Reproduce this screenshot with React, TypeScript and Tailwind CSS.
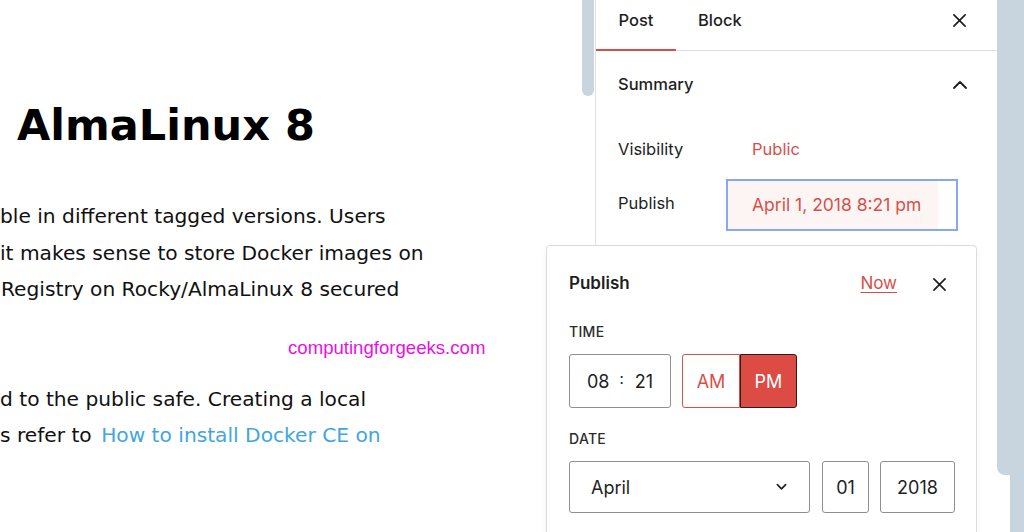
import React from "react";

function XIcon({ className }: { className?: string }) {
  return (
    <svg viewBox="0 0 14 14" className={className} fill="none" stroke="currentColor" strokeWidth="1.8" strokeLinecap="round">
      <path d="M1 1 L13 13 M13 1 L1 13" />
    </svg>
  );
}

function ChevronUp({ className }: { className?: string }) {
  return (
    <svg viewBox="0 0 14 8" className={className} fill="none" stroke="currentColor" strokeWidth="1.8" strokeLinecap="round" strokeLinejoin="round">
      <path d="M1 7 L7 1 L13 7" />
    </svg>
  );
}

function ChevronDown({ className }: { className?: string }) {
  return (
    <svg viewBox="0 0 12 8" className={className} fill="none" stroke="currentColor" strokeWidth="1.8" strokeLinecap="round" strokeLinejoin="round">
      <path d="M1.5 1.5 L6 6 L10.5 1.5" />
    </svg>
  );
}

export default function App() {
  return (
    <div className="relative flex h-[532px] w-[1024px] overflow-hidden bg-white text-[#1e1e1e]">
      {/* Editor content */}
      <main className="flex w-[595px] shrink-0">
        <div className="flex-1 overflow-hidden font-['DejaVu_Sans',Verdana,sans-serif] text-[#111]">
          <h1 className="mt-[100px] h-[50px] whitespace-nowrap pl-[17px] text-[43px] font-bold leading-[50px] text-black">
            AlmaLinux 8
          </h1>
          <div className="mt-[48px] whitespace-nowrap text-[20.2px] leading-[36.5px]">
            <div>ble in different tagged versions. Users</div>
            <div>it makes sense to store Docker images on</div>
            <div className="pl-[1px]">Registry on Rocky/AlmaLinux 8 secured</div>
          </div>
          <div className="mt-[28px] h-[24px] whitespace-nowrap pl-[288px] font-['Liberation_Sans',Arial,sans-serif] text-[18.6px] leading-[24px] text-[#ea0fe6]">
            computingforgeeks.com
          </div>
          <div className="mt-[21px] whitespace-nowrap text-[20.2px] leading-[36.5px]">
            <div>d to the public safe. Creating a local</div>
            <div>
              s refer to&nbsp;<span className="pl-[3px] text-[#41a6df]">How to install Docker CE on</span>
            </div>
          </div>
        </div>
        <div className="w-[14px] shrink-0 pl-[1px] pr-[1px]">
          <div className="h-[96px] w-[12px] rounded-b-full bg-[#c8d4de]" />
        </div>
      </main>

      {/* Sidebar */}
      <aside className="flex w-[402px] shrink-0 flex-col border-l border-[#e0e0e0] font-['Inter',sans-serif]">
        <div className="flex h-[51px] items-stretch border-b border-[#e0e0e0]">
          <div className="relative flex w-[80px] items-start justify-center pt-[8px] text-[16.5px] font-medium leading-[24px]">
            Post
            <span className="absolute bottom-[-1px] left-0 h-[2px] w-full bg-[#d94f48]" />
          </div>
          <div className="flex items-start px-[22px] pt-[8px] text-[16.5px] font-medium leading-[24px]">Block</div>
          <div className="ml-auto flex w-[76px] items-start justify-center pt-[14px]">
            <XIcon className="h-[13px] w-[13px] text-[#1e1e1e]" />
          </div>
        </div>

        <div className="flex h-[67px] items-center justify-between pl-[22px] pr-[30px]">
          <span className="text-[16.5px] font-medium">Summary</span>
          <ChevronUp className="h-[8px] w-[14px]" />
        </div>

        <div className="mt-[13px] flex h-[36px] items-center pl-[22px] text-[16.5px]">
          <span className="w-[134px]">Visibility</span>
          <span className="text-[#d6504a]">Public</span>
        </div>

        <div className="mt-[12px] flex items-center pl-[22px] text-[16.5px]">
          <span className="w-[108px] pb-[4px]">Publish</span>
          <div className="flex h-[52px] w-[232px] items-stretch border-2 border-[#87a7f2] bg-white">
            <div className="flex w-[210px] items-center bg-[#fdf5f4] pl-[24px] text-[17.5px] text-[#d6504a]">
              April 1, 2018 8:21 pm
            </div>
          </div>
        </div>
      </aside>

      {/* Right scrollbar */}
      <div className="flex w-[27px] shrink-0">
        <div className="h-[475px] w-[13px] rounded-bl-[8px] bg-[#c9d5de]" />
        <div className="h-full flex-1 bg-[#c9d5de]" />
      </div>

      {/* Publish popover */}
      <div className="absolute left-[546px] top-[245px] h-[320px] w-[431px] rounded-[4px] border border-[#dcdcde] bg-white font-['Inter',sans-serif] shadow-[0_2px_6px_rgba(0,0,0,0.05)]">
        <div className="flex h-[76px] items-center pl-[22px] pr-[30px]">
          <span className="text-[17px] font-semibold">Publish</span>
          <span className="ml-auto text-[17px] text-[#d6504a] underline underline-offset-[3px]">Now</span>
          <XIcon className="ml-[36px] h-[13px] w-[13px]" />
        </div>
        <div className="pl-[22px] text-[14px] font-medium uppercase leading-[20px] tracking-[0.3px] text-[#2c2c2c]">Time</div>
        <div className="mt-[12px] flex pl-[22px]">
          <div className="flex h-[54px] w-[102px] items-center rounded-[3px] border border-[#8c8f94] pl-[17px] text-[18px]">
            <span>08</span>
            <span className="ml-[10px] pb-[3px] text-[15px]">:</span>
            <span className="ml-[11px]">21</span>
          </div>
          <div className="ml-[11px] flex h-[54px] text-[18px]">
            <div className="flex w-[58px] items-center justify-center rounded-l-[3px] border border-[#d6504a] text-[#d6504a]">AM</div>
            <div className="flex w-[57px] items-center justify-center rounded-r-[3px] border border-[#2a1d1d] bg-[#dc4c45] text-white">PM</div>
          </div>
        </div>
        <div className="mt-[21px] pl-[22px] text-[14px] font-medium uppercase leading-[20px] tracking-[0.3px] text-[#2c2c2c]">Date</div>
        <div className="mt-[12px] flex pl-[22px] text-[18px]">
          <div className="flex h-[52px] w-[241px] items-center rounded-[3px] border border-[#8c8f94] pl-[21px] pr-[22px]">
            <span>April</span>
            <ChevronDown className="ml-auto h-[8px] w-[11px]" />
          </div>
          <div className="ml-[12px] flex h-[52px] w-[47px] items-center justify-center rounded-[3px] border border-[#8c8f94]">01</div>
          <div className="ml-[11px] flex h-[52px] w-[75px] items-center justify-center rounded-[3px] border border-[#8c8f94]">2018</div>
        </div>
      </div>
    </div>
  );
}
